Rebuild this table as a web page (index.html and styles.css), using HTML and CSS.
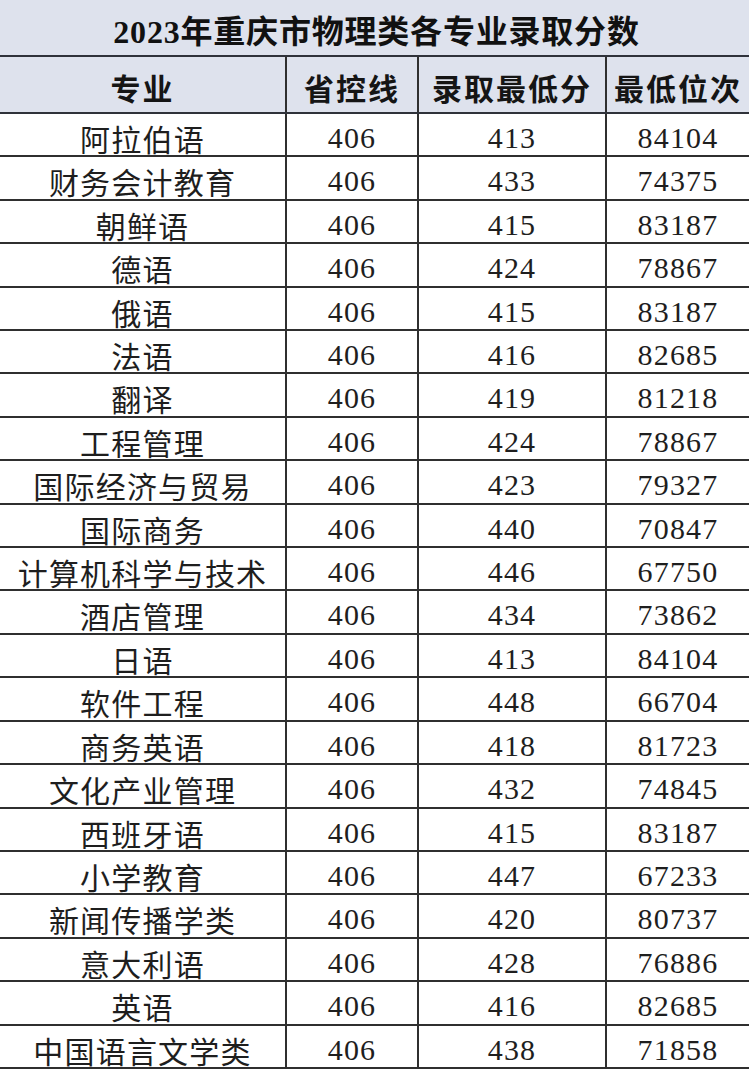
FILE: index.html
```html
<!DOCTYPE html>
<html lang="zh-CN">
<head>
<meta charset="utf-8">
<title>2023年重庆市物理类各专业录取分数</title>
<link rel="stylesheet" href="styles.css">
</head>
<body>
<div class="sheet">
  <div class="title">2023年重庆市物理类各专业录取分数</div>
  <div class="row head"><div class="c">专业</div><div class="c">省控线</div><div class="c">录取最低分</div><div class="c">最低位次</div></div>
  <div class="row"><div class="c">阿拉伯语</div><div class="c">406</div><div class="c">413</div><div class="c">84104</div></div>
  <div class="row"><div class="c">财务会计教育</div><div class="c">406</div><div class="c">433</div><div class="c">74375</div></div>
  <div class="row"><div class="c">朝鲜语</div><div class="c">406</div><div class="c">415</div><div class="c">83187</div></div>
  <div class="row"><div class="c">德语</div><div class="c">406</div><div class="c">424</div><div class="c">78867</div></div>
  <div class="row"><div class="c">俄语</div><div class="c">406</div><div class="c">415</div><div class="c">83187</div></div>
  <div class="row"><div class="c">法语</div><div class="c">406</div><div class="c">416</div><div class="c">82685</div></div>
  <div class="row"><div class="c">翻译</div><div class="c">406</div><div class="c">419</div><div class="c">81218</div></div>
  <div class="row"><div class="c">工程管理</div><div class="c">406</div><div class="c">424</div><div class="c">78867</div></div>
  <div class="row"><div class="c">国际经济与贸易</div><div class="c">406</div><div class="c">423</div><div class="c">79327</div></div>
  <div class="row"><div class="c">国际商务</div><div class="c">406</div><div class="c">440</div><div class="c">70847</div></div>
  <div class="row"><div class="c">计算机科学与技术</div><div class="c">406</div><div class="c">446</div><div class="c">67750</div></div>
  <div class="row"><div class="c">酒店管理</div><div class="c">406</div><div class="c">434</div><div class="c">73862</div></div>
  <div class="row"><div class="c">日语</div><div class="c">406</div><div class="c">413</div><div class="c">84104</div></div>
  <div class="row"><div class="c">软件工程</div><div class="c">406</div><div class="c">448</div><div class="c">66704</div></div>
  <div class="row"><div class="c">商务英语</div><div class="c">406</div><div class="c">418</div><div class="c">81723</div></div>
  <div class="row"><div class="c">文化产业管理</div><div class="c">406</div><div class="c">432</div><div class="c">74845</div></div>
  <div class="row"><div class="c">西班牙语</div><div class="c">406</div><div class="c">415</div><div class="c">83187</div></div>
  <div class="row"><div class="c">小学教育</div><div class="c">406</div><div class="c">447</div><div class="c">67233</div></div>
  <div class="row"><div class="c">新闻传播学类</div><div class="c">406</div><div class="c">420</div><div class="c">80737</div></div>
  <div class="row"><div class="c">意大利语</div><div class="c">406</div><div class="c">428</div><div class="c">76886</div></div>
  <div class="row"><div class="c">英语</div><div class="c">406</div><div class="c">416</div><div class="c">82685</div></div>
  <div class="row"><div class="c">中国语言文学类</div><div class="c">406</div><div class="c">438</div><div class="c">71858</div></div>
</div>
</body>
</html>
```
FILE: styles.css
```css
html, body {
  margin: 0;
  padding: 0;
  background: #ffffff;
}
body {
  font-family: "Liberation Serif", "Noto Sans CJK SC", serif;
  color: #1e1e1e;
  overflow: hidden;
}
.sheet {
  width: 749px;
  display: flex;
  flex-direction: column;
}
.title {
  box-sizing: border-box;
  height: 57px;
  background: #dee2ed;
  border-bottom: 2px solid #2f323a;
  display: flex;
  align-items: center;
  justify-content: center;
  padding: 3px 0 0 4px;
  font-size: 32px;
  font-weight: 700;
  color: #111111;
  letter-spacing: 0.8px;
}
.row {
  box-sizing: border-box;
  height: 43.41px;
  display: grid;
  grid-template-columns: 285px 132px 188px 1fr;
  border-bottom: 2px solid #2f2f2f;
  font-size: 30px;
}
.row.head {
  height: 57px;
  background: #dee2ed;
  font-weight: 700;
  color: #151515;
  border-bottom-color: #2f323a;
}
.row.head .c {
  letter-spacing: 2px;
  padding-top: 4px;
}
.c {
  display: flex;
  align-items: center;
  justify-content: center;
  padding-top: 2px;
  white-space: nowrap;
  letter-spacing: 1.2px;
}
.c + .c {
  border-left: 2px solid #2f2f2f;
}
```
